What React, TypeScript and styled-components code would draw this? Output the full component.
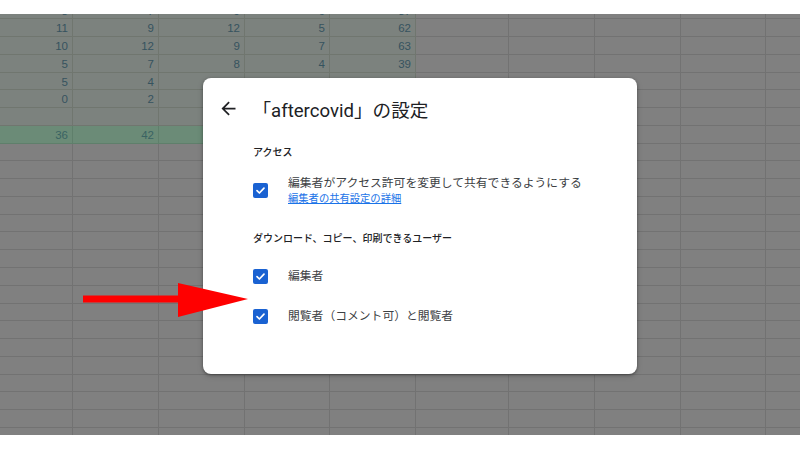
import React from 'react'
import styled, { createGlobalStyle } from 'styled-components'

const GlobalStyle = createGlobalStyle`
  html, body { margin: 0; padding: 0; background: #fff; }
  body { font-family: Roboto, "Noto Sans CJK JP", sans-serif; }
`

const colWidths = [73, 86, 86, 85, 86, 93, 86, 86, 85, 50]
const ROW_H = 17.78
const ROWS = 25

// values shown in the green (selected) block, one row per sheet row
const data: (string | number)[][] = [
    [8, 7, 9, 6, 37],
    [11, 9, 12, 5, 62],
    [10, 12, 9, 7, 63],
    [5, 7, 8, 4, 39],
    [5, 4, 5, 2, 24],
    [0, 2, 1, 3, 14],
    ['', '', '', '', ''],
    [36, 42, 44, 26, 148],
]

type Tone = 'plain' | 'sel' | 'total'

const lineFor = (t: Tone) => (t === 'total' ? '#5f7f6b' : t === 'sel' ? '#70766f' : '#727272')
const fillFor = (t: Tone) => (t === 'total' ? '#6b8b77' : t === 'sel' ? '#7c827e' : '#808080')

const Page = styled.div`
  position: relative;
  width: 800px;
  height: 450px;
  overflow: hidden;
  display: flex;
  flex-direction: column;
  background: #fff;
`

const Strip = styled.div<{ $h: number }>`
  height: ${p => p.$h}px;
  flex: none;
  background: #fff;
`

const Viewport = styled.div`
  height: 421px;
  flex: none;
  overflow: hidden;
  background: #808080;
`

const Grid = styled.div`
  display: grid;
  grid-template-columns: ${colWidths.map(w => w + 'px').join(' ')};
  grid-auto-rows: ${ROW_H}px;
  margin-top: -12.5px;
`

const Cell = styled.div<{ $tone: Tone }>`
  box-sizing: border-box;
  border-right: 1px solid ${p => lineFor(p.$tone)};
  border-bottom: 1px solid ${p => lineFor(p.$tone)};
  background: ${p => fillFor(p.$tone)};
  font-family: "Liberation Sans", Arial, sans-serif;
  font-size: 11.5px;
  color: ${p => (p.$tone === 'total' ? '#3a6363' : '#36535e')};
  text-align: right;
  padding: 1px 4px 0 0;
  line-height: ${ROW_H - 1}px;
  overflow: hidden;
`

const Dialog = styled.div`
  position: absolute;
  left: 203px;
  top: 78px;
  width: 434px;
  height: 296px;
  box-sizing: border-box;
  background: #fff;
  border-radius: 8px;
  box-shadow: 0 1px 3px rgba(0, 0, 0, 0.35), 0 2px 6px rgba(0, 0, 0, 0.15);
  padding: 12px 18px 0 14.5px;
`

const Header = styled.div`
  display: flex;
  align-items: center;
  height: 36px;
  gap: 14px;
`

const BackIcon = styled.svg`
  width: 21px;
  height: 21px;
  flex: none;
  fill: #202124;
`

const Title = styled.h1`
  margin: 0;
  font-size: 18.6px;
  font-weight: 400;
  color: #202124;
  font-family: Roboto, "Noto Sans CJK JP", sans-serif;
  white-space: nowrap;
`

const Body = styled.div`
  margin-left: 35.5px;
`

const SectionLabel = styled.div<{ $gap: number }>`
  margin-top: ${p => p.$gap}px;
  font-size: 10px;
  line-height: 14px;
  font-weight: 500;
  color: #202124;
  white-space: nowrap;
`

const Row = styled.div<{ $gap: number }>`
  display: flex;
  align-items: center;
  gap: 20px;
  margin-top: ${p => p.$gap}px;
`

const Box = styled.span`
  width: 15px;
  height: 15px;
  flex: none;
  border-radius: 2px;
  background: #1a62d2;
  display: flex;
  align-items: center;
  justify-content: center;
`

const TextCol = styled.div`
  display: flex;
  flex-direction: column;
`

const Label = styled.span`
  font-size: 11.8px;
  line-height: 15px;
  color: #3c4043;
  white-space: nowrap;
`

const Link = styled.a`
  font-size: 10.3px;
  line-height: 15px;
  color: #1a73e8;
  text-decoration: underline;
  white-space: nowrap;
`

const Annotation = styled.svg`
  position: absolute;
  left: 0;
  top: 0;
  width: 800px;
  height: 450px;
  pointer-events: none;
`

function Check() {
    return (
        <Box>
            <svg width="11" height="11" viewBox="0 0 11 11">
                <path d="M2 5.7 L4.4 8 L9 3.2" fill="none" stroke="#fff" strokeWidth="1.7" strokeLinecap="round" strokeLinejoin="round" />
            </svg>
        </Box>
    )
}

export default function App() {
    const cells: React.ReactNode[] = []
    for (let r = 0; r < ROWS; r++) {
        for (let c = 0; c < colWidths.length; c++) {
            let tone: Tone = 'plain'
            let value: string | number = ''
            if (r < data.length && c < 5) {
                tone = r === 7 ? 'total' : 'sel'
                value = data[r][c]
            }
            cells.push(<Cell key={`${r}-${c}`} $tone={tone}>{value}</Cell>)
        }
    }

    return (
        <Page>
            <GlobalStyle />
            <Strip $h={14} />
            <Viewport>
                <Grid>{cells}</Grid>
            </Viewport>
            <Strip $h={15} />

            <Dialog>
                <Header>
                    <BackIcon viewBox="0 0 24 24">
                        <path d="M20 11H7.83l5.59-5.59L12 4l-8 8 8 8 1.41-1.41L7.83 13H20v-2z" />
                    </BackIcon>
                    <Title>「aftercovid」の設定</Title>
                </Header>
                <Body>
                    <SectionLabel $gap={20}>アクセス</SectionLabel>
                    <Row $gap={15.5}>
                        <Check />
                        <TextCol>
                            <Label>編集者がアクセス許可を変更して共有できるようにする</Label>
                            <Link>編集者の共有設定の詳細</Link>
                        </TextCol>
                    </Row>
                    <SectionLabel $gap={26.5}>ダウンロード、コピー、印刷できるユーザー</SectionLabel>
                    <Row $gap={22.5}>
                        <Check />
                        <Label>編集者</Label>
                    </Row>
                    <Row $gap={25.5}>
                        <Check />
                        <Label>閲覧者（コメント可）と閲覧者</Label>
                    </Row>
                </Body>
            </Dialog>

            <Annotation viewBox="0 0 800 450">
                <rect x="83" y="295.5" width="97" height="7" fill="#ff0000" />
                <polygon points="178,283 248,299 178,317" fill="#ff0000" />
            </Annotation>
        </Page>
    )
}
